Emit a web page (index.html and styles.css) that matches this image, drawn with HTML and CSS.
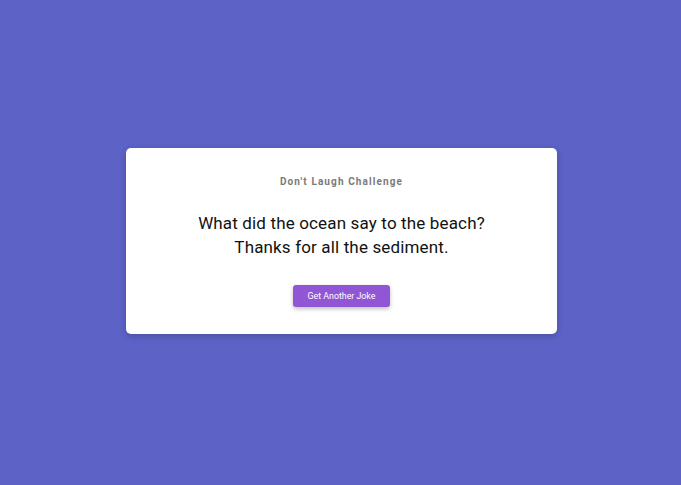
FILE: index.html
```html
<!DOCTYPE html>
<html lang="en">
<head>
<meta charset="utf-8">
<title>Don't Laugh Challenge</title>
<link rel="stylesheet" href="styles.css">
</head>
<body>
<main class="page">
  <section class="card">
    <h1 class="title">Don't Laugh Challenge</h1>
    <p class="joke">What did the ocean say to the beach?<br>Thanks for all the sediment.</p>
    <button class="btn" type="button">Get Another Joke</button>
  </section>
</main>
</body>
</html>
```
FILE: styles.css
```css
html, body {
  margin: 0;
  padding: 0;
  height: 100%;
}
body {
  background: #5c62c6;
  font-family: Roboto, "Liberation Sans", sans-serif;
}
.page {
  box-sizing: border-box;
  min-height: 100%;
  padding: 0 0 4px 2px;
  display: flex;
  align-items: center;
  justify-content: center;
}
.card {
  width: 431px;
  box-sizing: border-box;
  background: #fff;
  border-radius: 5px;
  box-shadow: 0 2px 6px rgba(0,0,0,0.2);
  padding: 27px 24px 27px;
  display: flex;
  flex-direction: column;
  align-items: center;
  text-align: center;
}
.title {
  margin: 0;
  font-size: 10px;
  line-height: 13px;
  font-weight: 700;
  letter-spacing: 1.1px;
  color: #7a7a7a;
}
.joke {
  margin: 23px 0 26px;
  font-size: 17px;
  line-height: 24px;
  letter-spacing: 0.15px;
  color: #111;
}
.btn {
  font-family: inherit;
  font-size: 8.8px;
  color: #fff;
  background: #9156d6;
  border: none;
  border-radius: 3px;
  width: 97px;
  height: 22px;
  padding: 0;
  box-shadow: 0 2px 4px rgba(0,0,0,0.25);
}
```
